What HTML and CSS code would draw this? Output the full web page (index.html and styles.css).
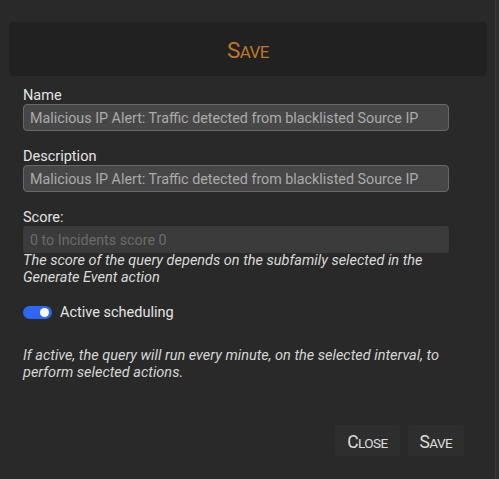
FILE: index.html
```html
<!DOCTYPE html>
<html lang="en">
<head>
<meta charset="utf-8">
<title>Save</title>
<link rel="stylesheet" href="styles.css">
</head>
<body>
<div class="modal">
  <div class="header"><h1 class="title">Save</h1></div>
  <div class="form">
    <div class="field">
      <label class="label">Name</label>
      <input class="input" type="text" readonly value="Malicious IP Alert: Traffic detected from blacklisted Source IP">
    </div>
    <div class="field">
      <label class="label">Description</label>
      <input class="input" type="text" readonly value="Malicious IP Alert: Traffic detected from blacklisted Source IP">
    </div>
    <div class="field field-last">
      <label class="label">Score:</label>
      <input class="input input-disabled" type="text" disabled placeholder="0 to Incidents score 0">
    </div>
    <p class="help">The score of the query depends on the subfamily selected in the Generate Event action</p>
    <div class="toggle-row">
      <span class="toggle"><span class="knob"></span></span>
      <span class="toggle-label">Active scheduling</span>
    </div>
    <p class="help help-2">If active, the query will run every minute, on the selected interval, to perform selected actions.</p>
  </div>
  <div class="actions">
    <button class="btn"><span class="cap">C</span>lose</button>
    <button class="btn"><span class="cap">S</span>ave</button>
  </div>
</div>
</body>
</html>
```
FILE: styles.css
```css
html, body {
  margin: 0;
  padding: 0;
  background: #2e2e2e;
  font-family: Roboto, "Liberation Sans", sans-serif;
}
.modal {
  box-sizing: border-box;
  width: 496px;
  height: 479px;
  background: #292929;
  border-right: 1px solid #3a3a3a;
  padding-top: 22px;
  display: flex;
  flex-direction: column;
}
.header {
  margin: 0 8px 0 9px;
  height: 54px;
  background: #212121;
  border-radius: 4px;
  display: flex;
  align-items: center;
  justify-content: center;
}
.title {
  margin: 0;
  font-size: 17px;
  font-weight: 400;
  text-transform: uppercase;
  letter-spacing: -0.6px;
  color: #bd772c;
  line-height: 1;
  padding-top: 2px;
}
.title::first-letter {
  font-size: 22.5px;
}
.form {
  padding: 12px 0 0 23px;
  width: 426px;
}
.field {
  display: flex;
  flex-direction: column;
  margin-bottom: 18px;
}
.field-last {
  margin-bottom: 0;
}
.label {
  font-size: 14.5px;
  line-height: 16px;
  color: #e4e4e4;
}
.input {
  box-sizing: border-box;
  width: 426px;
  height: 27px;
  margin: 0;
  padding: 0 6px;
  background: #474747;
  border: 1px solid #686868;
  border-radius: 4px;
  color: #ababab;
  font-family: Roboto, "Liberation Sans", sans-serif;
  font-size: 14.3px;
  outline: none;
}
.input-disabled {
  background: #3b3b3b;
  border-color: #3b3b3b;
  border-radius: 3px;
}
.input-disabled::placeholder {
  color: #6b6b6b;
}
.help {
  margin: 0;
  font-size: 14.5px;
  line-height: 16.5px;
  font-style: italic;
  color: #dadada;
}
.toggle-row {
  display: flex;
  align-items: center;
  height: 17px;
  margin-top: 18px;
  gap: 8px;
}
.toggle {
  position: relative;
  width: 29px;
  height: 13px;
  border-radius: 7px;
  background: #2f66f2;
}
.knob {
  position: absolute;
  right: 3px;
  top: 2px;
  width: 9px;
  height: 9px;
  border-radius: 50%;
  background: #ffffff;
}
.toggle-label {
  font-size: 14.5px;
  color: #e4e4e4;
  line-height: 17px;
}
.help-2 {
  margin-top: 26px;
  line-height: 17px;
  color: #d6d6d6;
}
.actions {
  margin-top: 44px;
  padding-right: 31px;
  display: flex;
  justify-content: flex-end;
  gap: 8px;
}
.btn {
  height: 31px;
  padding: 2px 12px 0;
  background: #2e2e2e;
  border: none;
  border-radius: 3px;
  color: #dcdcdc;
  font-family: Roboto, "Liberation Sans", sans-serif;
  font-size: 13.5px;
  text-transform: uppercase;
  letter-spacing: -0.6px;
  cursor: pointer;
}
.cap {
  font-size: 17.5px;
}
```
